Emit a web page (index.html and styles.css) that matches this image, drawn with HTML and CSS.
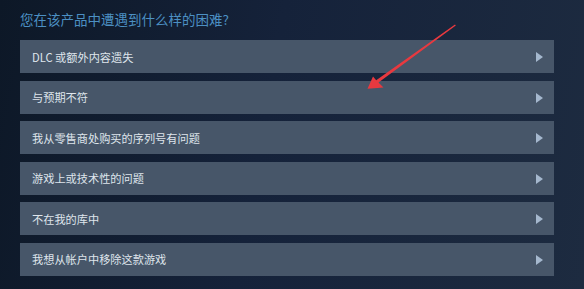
FILE: index.html
```html
<html>

<head>
<meta charset="utf-8">
<link rel="stylesheet" href="styles.css">
</head>

<body>
<div class="page">
    <h2 class="question">您在该产品中遭遇到什么样的困难?</h2>

    <div class="options">
        <a class="option" href="#">DLC 或额外内容遗失</a>
        <a class="option" href="#">与预期不符</a>
        <a class="option" href="#">我从零售商处购买的序列号有问题</a>
        <a class="option" href="#">游戏上或技术性的问题</a>
        <a class="option" href="#">不在我的库中</a>
        <a class="option" href="#">我想从帐户中移除这款游戏</a>
    </div>

    <!-- annotation arrow drawn over the screenshot -->
    <svg class="annotation" viewBox="0 0 584 289" width="584" height="289">
        <path fill="#e8393f" d="M 455,24.5 L 455.8,25.6 L 378.5,82.6 L 383.5,87.5 L 367.5,88.8 L 373,76.5 L 376.2,80.2 Z" />
    </svg>
</div>
</body>

</html>
```

FILE: styles.css
```css
html, body {
    margin: 0;
    height: 100%;
}

body {
    background: linear-gradient(100deg, #0d1827 0%, #15223a 45%, #1d2b40 100%);
    font-family: "Noto Sans CJK SC", "Noto Sans", sans-serif;
    overflow: hidden;
}

.page {
    position: relative;
    padding: 8.5px 30px 0 20px;
    height: 100%;
    box-sizing: border-box;
}

.question {
    margin: 0 0 11.5px 0;
    font-size: 13.5px;
    line-height: 20px;
    font-weight: normal;
    color: #4c90c3;
}

.options {
    display: flex;
    flex-direction: column;
    gap: 7.5px;
    width: 534px;
}

.option {
    display: flex;
    align-items: center;
    height: 33px;
    padding: 0 12px;
    background: #475669;
    color: #dfe5ec;
    font-size: 11.2px;
    text-decoration: none;
    position: relative;
}

.option::after {
    content: "";
    position: absolute;
    right: 11px;
    top: 12px;
    border-left: 7px solid #a5b8ce;
    border-top: 5px solid transparent;
    border-bottom: 5px solid transparent;
}

.annotation {
    position: absolute;
    left: 0;
    top: 0;
    pointer-events: none;
}
```
